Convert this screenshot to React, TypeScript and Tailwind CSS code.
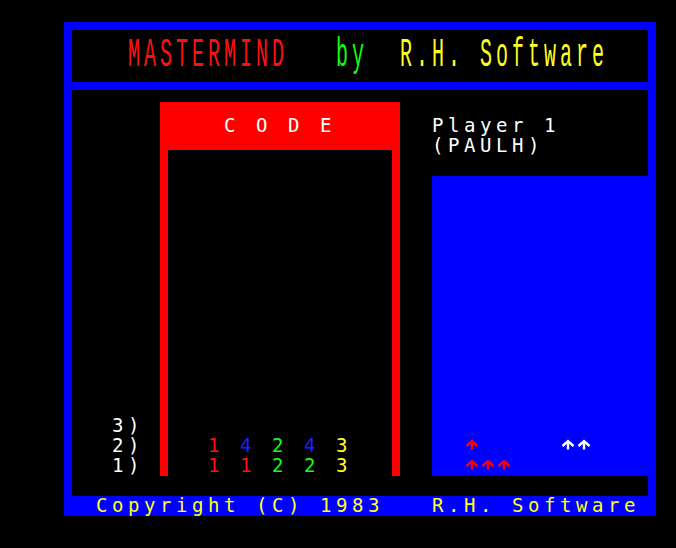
const RED = '#ff0000'
const WHITE = '#ffffff'

function Arrow({ color }: { color: string }) {
  return (
    <svg width="16" height="20" viewBox="0 0 16 20" className="block">
      <path d="M2.5 10 L8 5 L13.5 10 M8 5 V13.5" fill="none" stroke={color} strokeWidth="2.4" />
    </svg>
  )
}

function Gap({ cells }: { cells: number }) {
  return <div style={{ width: cells * 16 }} />
}

export default function App() {
  return (
    <div className="w-[676px] h-[548px] bg-black overflow-hidden pt-[22px] font-['DejaVu_Sans_Mono',monospace] text-[19px] leading-[18px] tracking-[4.56px] whitespace-pre">
      <div className="ml-[64px] w-[592px] h-[494px] bg-[#0000ff] pt-[8px] px-[8px] flex flex-col">
        {/* title */}
        <div className="h-[52px] bg-black pt-[6px] pl-[56px] font-['Liberation_Mono',monospace] text-[20px] leading-[20px] tracking-[4px]">
          <div className="h-[20px] origin-top scale-y-200">
            <span className="text-[#ff1010]">MASTERMIND</span>
            <span>   </span>
            <span className="text-[#10ff10]">by</span>
            <span>  </span>
            <span className="text-[#ffff20]">R.H. Software</span>
          </div>
        </div>

        {/* main */}
        <div className="mt-[8px] h-[406px] bg-black flex">
          <div className="w-[88px] flex flex-col justify-end pb-[20px] pl-[40px] text-white">
            <div className="h-[20px]">3)</div>
            <div className="h-[20px]">2)</div>
            <div className="h-[20px]">1)</div>
          </div>

          <div className="mt-[12px] mb-[20px] w-[240px] flex flex-col">
            <div className="h-[48px] bg-[#ff0000] pt-[14px] pl-[64px] text-white">C O D E</div>
            <div className="flex-1 border-x-[8px] border-[#ff0000] bg-black flex flex-col justify-end pl-[40px]">
              <div className="h-[20px]">
                <span className="text-[#ff1010]">1 </span>
                <span className="text-[#2020ff]">4 </span>
                <span className="text-[#10ff10]">2 </span>
                <span className="text-[#2020ff]">4 </span>
                <span className="text-[#ffff20]">3</span>
              </div>
              <div className="h-[20px]">
                <span className="text-[#ff1010]">1 </span>
                <span className="text-[#ff1010]">1 </span>
                <span className="text-[#10ff10]">2 </span>
                <span className="text-[#10ff10]">2 </span>
                <span className="text-[#ffff20]">3</span>
              </div>
            </div>
          </div>

          <div className="ml-[32px] flex-1 flex flex-col pb-[20px]">
            <div className="h-[86px] pt-[26px] text-white">
              <div className="h-[20px]">Player 1</div>
              <div className="h-[20px]">(PAULH)</div>
            </div>
            <div className="flex-1 bg-[#0000ff] flex flex-col justify-end pl-[32px]">
              <div className="h-[20px] flex">
                <Arrow color={RED} />
                <Gap cells={5} />
                <Arrow color={WHITE} />
                <Arrow color={WHITE} />
              </div>
              <div className="h-[20px] flex">
                <Arrow color={RED} />
                <Arrow color={RED} />
                <Arrow color={RED} />
              </div>
            </div>
          </div>
        </div>

        {/* footer */}
        <div className="h-[20px] pl-[24px] text-[#ffff20]">Copyright (C) 1983   R.H. Software</div>
      </div>
    </div>
  )
}
